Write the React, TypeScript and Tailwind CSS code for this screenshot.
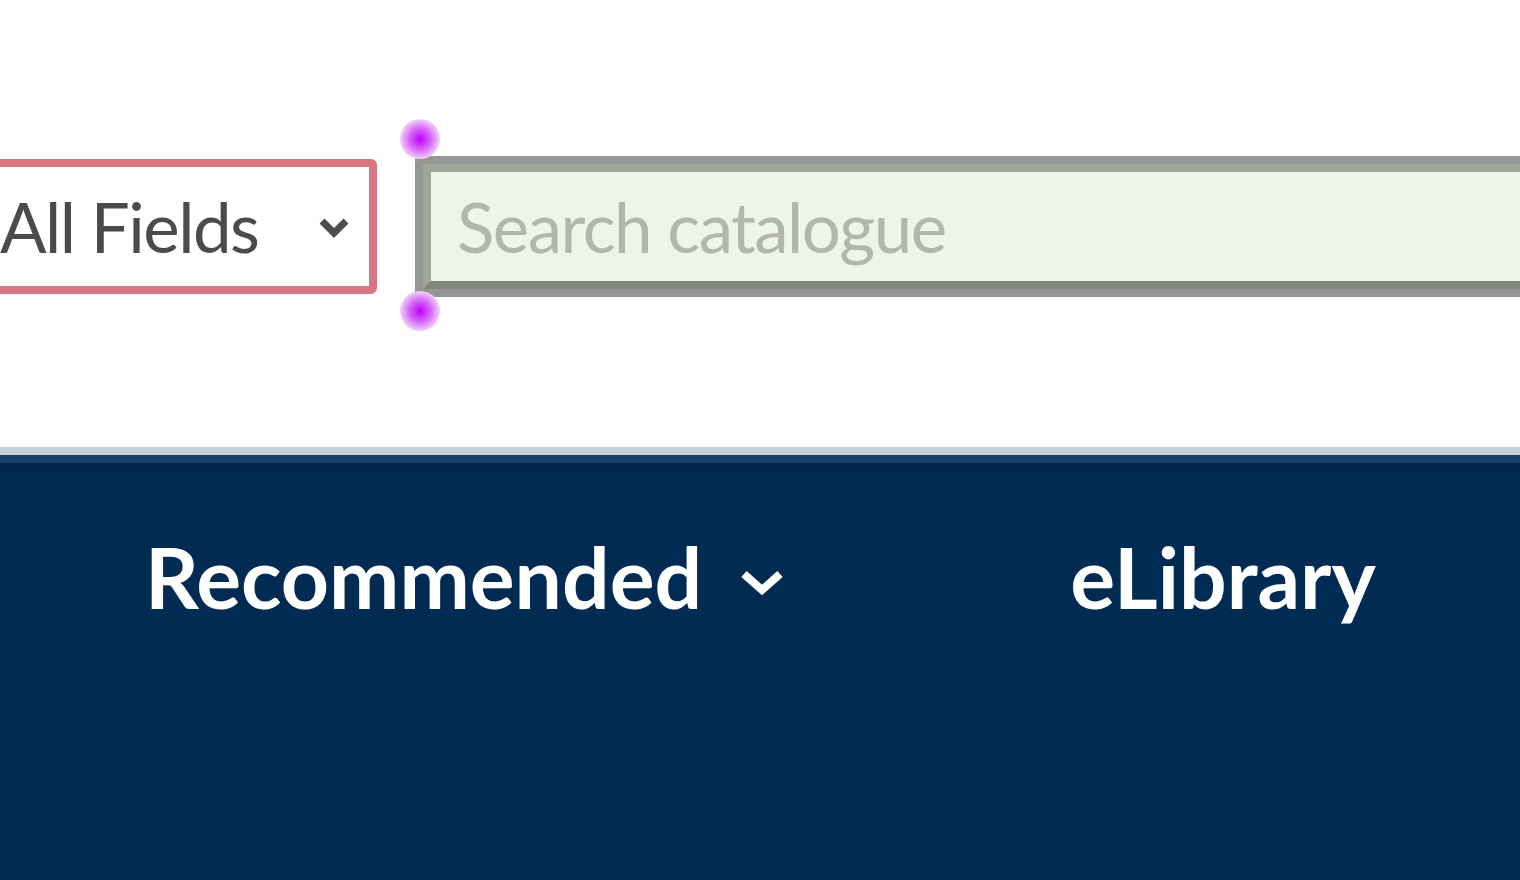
import React from "react";

function Handle() {
  return (
    <svg width="44" height="44" viewBox="0 0 44 44">
      <defs>
        <radialGradient id="hg" cx="50%" cy="50%" r="50%">
          <stop offset="0%" stopColor="#c000ff" />
          <stop offset="55%" stopColor="#d66af5" />
          <stop offset="100%" stopColor="#f2d0fa" />
        </radialGradient>
      </defs>
      <circle cx="22" cy="22" r="20" fill="url(#hg)" />
    </svg>
  );
}

export default function App() {
  return (
    <div
      className="w-[1520px] h-[880px] bg-white overflow-hidden flex flex-col"
      style={{ fontFamily: "Lato, 'Open Sans', sans-serif" }}
    >
      <div className="h-[447px] flex items-center pt-[6px]">
        <div className="ml-[-70px] w-[447px] h-[135px] shrink-0 border-[8px] border-[#d97680] rounded-[6px] bg-white flex items-center justify-between pl-[62px] pr-[18px]">
          <span className="text-[69px] tracking-[-1.5px] leading-none text-[#4b4b4b]">All Fields</span>
          <svg width="34" height="24" viewBox="0 0 34 24">
            <path d="M5 6 L17 18 L29 6" fill="none" stroke="#4d4d4d" strokeWidth="7" />
          </svg>
        </div>
        <div className="relative ml-[38px] mr-[-40px] flex-1 h-[141px] bg-[#969696] p-[8px]">
          <div className="h-full w-full bg-[#eef5e6] border-[8px] border-[#a0a899] border-b-[#808679] flex items-center pl-[26px]">
            <span className="text-[69px] tracking-[-1.5px] leading-none text-[#b3b6ac]">Search catalogue</span>
          </div>
          <div className="absolute left-[-17px] top-[-39px]">
            <Handle />
          </div>
          <div className="absolute left-[-17px] bottom-[-36px]">
            <Handle />
          </div>
        </div>
      </div>
      <div className="h-[8px] bg-[#c5cfd8]" />
      <div className="h-[8px] bg-[#153f65]" />
      <div className="h-[8px] bg-[#00264c]" />
      <div className="flex-1 bg-[#012b53] flex items-start pt-[64px]">
        <div className="ml-[145px] flex items-center gap-[34px]">
          <span className="text-[84px] font-bold leading-none text-white">Recommended</span>
          <svg width="52" height="30" viewBox="0 0 52 30" className="mt-[8px]">
            <path d="M8 8 L26 24 L44 8" fill="none" stroke="#ffffff" strokeWidth="8" />
          </svg>
        </div>
        <span className="ml-[282px] text-[84px] font-bold leading-none text-white">eLibrary</span>
      </div>
    </div>
  );
}
